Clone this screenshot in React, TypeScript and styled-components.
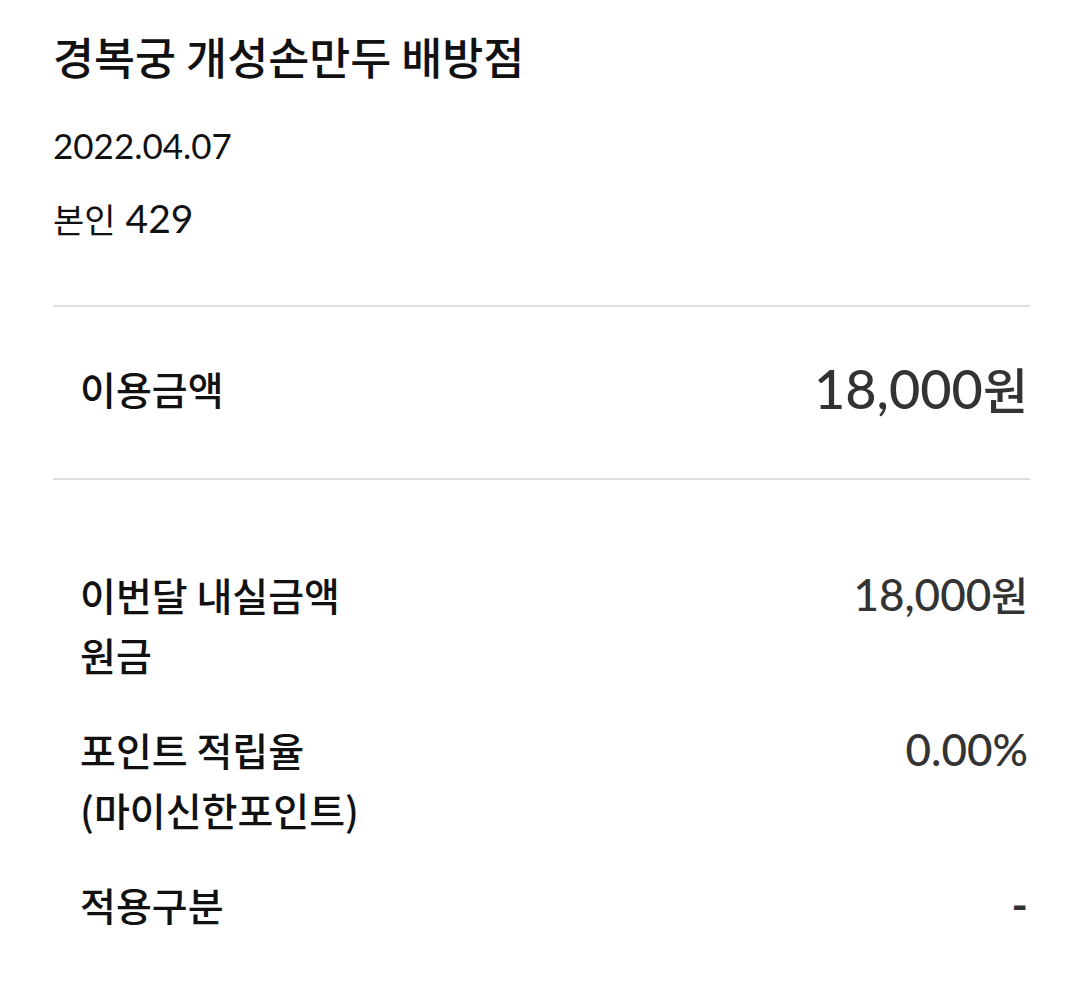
import styled, { createGlobalStyle } from "styled-components";

const GlobalStyle = createGlobalStyle`
  html, body {
    margin: 0;
    padding: 0;
    background: #ffffff;
  }
  body {
    font-family: "Lato", "Noto Sans CJK KR", sans-serif;
    -webkit-font-smoothing: antialiased;
  }
`;

const Page = styled.div`
  padding: 25px 47px 40px 53px;
`;

const Title = styled.h1`
  margin: 0;
  font-family: "Noto Sans CJK KR", sans-serif;
  font-size: 44.6px;
  font-weight: 500;
  line-height: 62px;
  color: #111111;
`;

const DateText = styled.div`
  margin-top: 32px;
  font-size: 35px;
  line-height: 52px;
  color: #111111;
`;

const Owner = styled.div`
  margin-top: 22px;
  display: flex;
  align-items: baseline;
  gap: 10px;
  color: #111111;
`;

const OwnerLabel = styled.span`
  font-family: "Noto Sans CJK KR", sans-serif;
  font-size: 34px;
  line-height: 50px;
`;

const OwnerNumber = styled.span`
  font-size: 39px;
  line-height: 50px;
`;

const Divider = styled.hr`
  margin: 0;
  border: 0;
  height: 2px;
  background: #dedede;
`;

const TotalSection = styled.div`
  margin-top: 61px;
`;

const TotalRow = styled.div`
  box-sizing: border-box;
  display: flex;
  justify-content: space-between;
  align-items: center;
  height: 171px;
  padding: 0 2px 9px 27px;
`;

const Label = styled.div`
  font-family: "Noto Sans CJK KR", sans-serif;
  font-size: 39px;
  font-weight: 500;
  line-height: 60px;
  color: #111111;
`;

const BigAmount = styled.div`
  font-size: 54px;
  font-weight: 500;
  line-height: 60px;
  color: #333333;
`;

const Won = styled.span<{ $size: number }>`
  font-family: "Noto Sans CJK KR", sans-serif;
  font-size: ${(p) => p.$size}px;
`;

const DetailList = styled.div`
  display: flex;
  flex-direction: column;
  gap: 35px;
  padding: 84px 2px 0 27px;
`;

const DetailRow = styled.div`
  display: flex;
  justify-content: space-between;
  align-items: flex-start;
`;

const Value = styled.div<{ $dash?: boolean }>`
  font-size: 44px;
  font-weight: ${(p) => (p.$dash ? 700 : 500)};
  line-height: 60px;
  color: #333333;
`;

const rows = [
  { label: ["이번달 내실금액", "원금"], value: "18,000", unit: "원" },
  { label: ["포인트 적립율", "(마이신한포인트)"], value: "0.00%" },
  { label: ["적용구분"], value: "-" },
];

export default function App() {
  return (
    <>
      <GlobalStyle />
      <Page>
        <Title>경복궁 개성손만두 배방점</Title>
        <DateText>2022.04.07</DateText>
        <Owner>
          <OwnerLabel>본인</OwnerLabel>
          <OwnerNumber>429</OwnerNumber>
        </Owner>

        <TotalSection>
          <Divider />
          <TotalRow>
            <Label>이용금액</Label>
            <BigAmount>
              18,000<Won $size={49}>원</Won>
            </BigAmount>
          </TotalRow>
          <Divider />
        </TotalSection>

        <DetailList>
          {rows.map((row) => (
            <DetailRow key={row.label[0]}>
              <Label>
                {row.label.map((line) => (
                  <div key={line}>{line}</div>
                ))}
              </Label>
              <Value $dash={row.value === "-"}>
                {row.value}
                {row.unit && <Won $size={40}>{row.unit}</Won>}
              </Value>
            </DetailRow>
          ))}
        </DetailList>
      </Page>
    </>
  );
}
